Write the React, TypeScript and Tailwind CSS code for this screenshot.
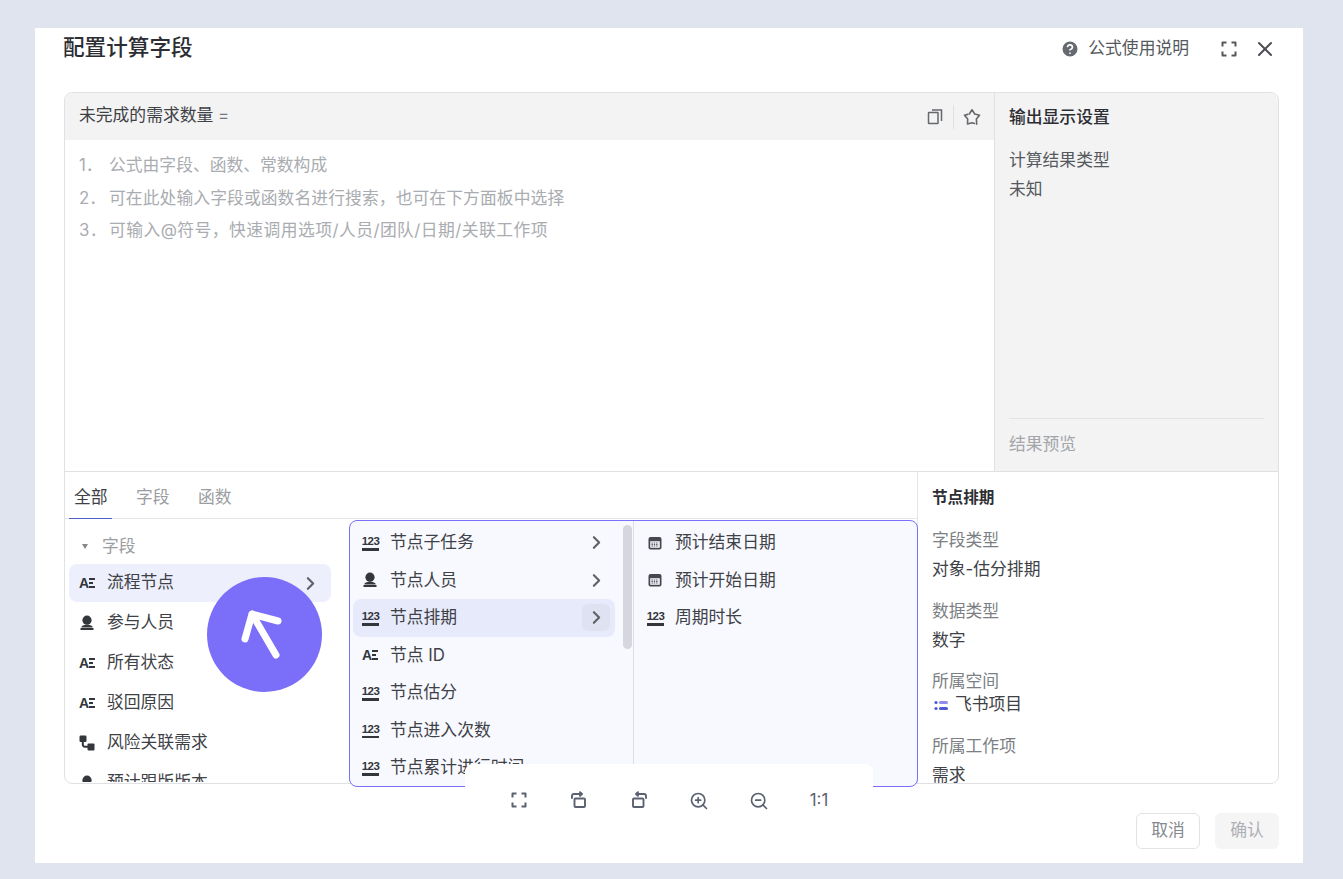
import { ChevronRight, CircleHelp, X, ZoomIn, ZoomOut } from "lucide-react";

type Kind = "num" | "text" | "user" | "link" | "date";

function NumIcon() {
  return (
    <span className="flex h-[16px] w-[17px] shrink-0 flex-col items-center justify-end">
      <span className="[font-family:'Liberation_Sans',sans-serif] text-[11.5px] leading-[11px] font-bold tracking-[-0.6px] text-[#33363a]">123</span>
      <span className="mt-[1px] h-[2.500px] w-[17px] bg-[#33363a]" />
    </span>
  );
}

function TextIcon() {
  return (
    <span className="flex h-[15px] w-[16px] shrink-0 items-center">
      <span className="[font-family:'Liberation_Sans',sans-serif] text-[14px] leading-none font-bold text-[#33363a]">A</span>
      <span className="flex flex-col gap-[2px]">
        <span className="h-[2px] w-[6px] bg-[#33363a]" />
        <span className="h-[2px] w-[4px] bg-[#33363a]" />
        <span className="h-[2px] w-[6px] bg-[#33363a]" />
      </span>
    </span>
  );
}

function FieldIcon({ kind }: { kind: Kind }) {
  if (kind === "num") return <NumIcon />;
  if (kind === "text") return <TextIcon />;
  if (kind === "user") {
    return (
      <svg width="16" height="16" viewBox="0 0 16 16" className="shrink-0" fill="#33363a">
        <circle cx="8" cy="5.200" r="4.600" />
        <path d="M2.500 11.500c1-1.200 3.300-1.700 5.500-1.700s4.500.5 5.500 1.700v1h-11z" />
        <rect x="1.500" y="13" width="13" height="2" />
      </svg>
    );
  }
  if (kind === "link") {
    return (
      <svg width="16" height="16" viewBox="0 0 16 16" className="shrink-0" fill="#33363a">
        <rect x="0.500" y="0.500" width="7" height="6.500" rx="1.200" />
        <path d="M2.800 6h2v3.400c0 .9.500 1.400 1.400 1.400H9v2H6c-2 0-3.200-1.200-3.200-3.200z" />
        <rect x="8.500" y="8.500" width="7" height="7" rx="1" />
      </svg>
    );
  }
  return (
    <svg width="16" height="16" viewBox="0 0 16 16" className="shrink-0">
      <rect x="1.500" y="2" width="13" height="12.500" rx="2" fill="#45484e" />
      <rect x="3.200" y="6.200" width="9.600" height="6.600" fill="#f2f3f8" />
      <path d="M4.500 8h7M4.500 9.500h7M4.500 11h7" stroke="#45484e" strokeWidth="0.900" strokeDasharray="1.400 0.900" />
    </svg>
  );
}

function ExpandIcon({ color = "#5a6170" }: { color?: string }) {
  return (
    <svg width="18" height="18" viewBox="0 0 18 18" fill="none" stroke={color} strokeWidth="2" strokeLinejoin="round">
      <path d="M2.500 6.500V2.500h4M11.500 2.500h4v4M15.500 11.500v4h-4M6.500 15.500h-4v-4" />
    </svg>
  );
}

function RotateIcon({ flip }: { flip?: boolean }) {
  return (
    <svg width="18" height="18" viewBox="0 0 18 18" fill="none" stroke="#5a6170" strokeWidth="1.900" strokeLinecap="round" strokeLinejoin="round" className={flip ? "-scale-x-100" : ""}>
      <rect x="4.500" y="7.500" width="10.500" height="8.500" rx="1" />
      <path d="M2 7V5C2 3.800 2.800 3 4 3h7.500M10 1.200 12 3l-2 1.800" />
    </svg>
  );
}

function CopyIcon() {
  return (
    <svg width="17" height="17" viewBox="0 0 17 17" fill="none" stroke="#65686d" strokeWidth="1.500">
      <rect x="1.500" y="4.500" width="9.500" height="11" rx="0.500" />
      <path d="M5 2h9.500v11" />
    </svg>
  );
}

function PinStarIcon() {
  return (
    <svg width="18" height="18" viewBox="0 0 18 18" fill="none" stroke="#65686d" strokeWidth="1.600" strokeLinecap="round" strokeLinejoin="round">
      <path d="M6.300 6 9 1.800 11.700 6l4.800 1.200-3.100 3.900.3 5" />
      <path d="M11.500 15.500 9 14.700 4.500 16l.2-5-3.200-3.800L4.800 6.400" />
    </svg>
  );
}

const mainFields: { kind: Kind; label: string; active?: boolean }[] = [
  { kind: "text", label: "流程节点", active: true },
  { kind: "user", label: "参与人员" },
  { kind: "text", label: "所有状态" },
  { kind: "text", label: "驳回原因" },
  { kind: "link", label: "风险关联需求" },
  { kind: "user", label: "预计跟版版本" },
];

const nodeFields: { kind: Kind; label: string; arrow?: boolean; active?: boolean }[] = [
  { kind: "num", label: "节点子任务", arrow: true },
  { kind: "user", label: "节点人员", arrow: true },
  { kind: "num", label: "节点排期", arrow: true, active: true },
  { kind: "text", label: "节点 ID" },
  { kind: "num", label: "节点估分" },
  { kind: "num", label: "节点进入次数" },
  { kind: "num", label: "节点累计进行时间" },
];

const scheduleFields: { kind: Kind; label: string }[] = [
  { kind: "date", label: "预计结束日期" },
  { kind: "date", label: "预计开始日期" },
  { kind: "num", label: "周期时长" },
];

export default function App() {
  return (
    <div className="h-[879px] w-[1343px] overflow-hidden bg-[#e0e4ef] pt-[28px] pl-[35px] [font-family:Inter,'Noto_Sans_CJK_SC',sans-serif] text-[16.8px] text-[#3e4146]">
      <div className="relative flex h-[835px] w-[1268px] flex-col bg-white px-[29px]">
        <header className="flex h-[40px] items-center justify-between">
          <h1 className="-ml-[1px] text-[21.6px] leading-none font-medium text-[#2c2e33]">配置计算字段</h1>
          <div className="flex items-center pt-[2px]">
            <CircleHelp size={20} fill="#666a70" stroke="#ffffff" strokeWidth={2} className="mr-[8px]" />
            <span className="text-[#55585d]">公式使用说明</span>
            <span className="mr-[15px] ml-[31px]"><ExpandIcon color="#55585d" /></span>
            <X size={24} stroke="#4a4d52" strokeWidth={2} className="-mr-[3px]" />
          </div>
        </header>

        <section className="mt-[24px] flex h-[692px] w-[1215px] flex-col rounded-lg border border-[#dfe1e4]">
          <div className="flex h-[379px] border-b border-[#dfe1e4]">
            <div className="flex min-w-0 flex-1 flex-col">
              <div className="flex h-[47px] items-center justify-between rounded-tl-lg bg-[#f3f3f3] pr-[13px] pl-[14px]">
                <span className="pb-[2px]">未完成的需求数量 <span className="text-[#74777c]">=</span></span>
                <div className="flex items-center">
                  <CopyIcon />
                  <span className="mx-[9px] h-[24px] w-px bg-[#e0e1e3]" />
                  <PinStarIcon />
                </div>
              </div>
              <ol className="px-[14px] pt-[9px] leading-[32.5px] text-[#a9acb0]">
                <li><span className="inline-block w-[30px]">1．</span>公式由字段、函数、常数构成</li>
                <li className="tracking-[0.08px]"><span className="inline-block w-[30px]">2．</span>可在此处输入字段或函数名进行搜索，也可在下方面板中选择</li>
                <li className="tracking-[0.45px]"><span className="inline-block w-[30px]">3．</span>可输入@符号，快速调用选项/人员/团队/日期/关联工作项</li>
              </ol>
            </div>
            <aside className="flex w-[284px] shrink-0 flex-col rounded-tr-lg border-l border-[#dfe1e4] bg-[#f3f3f3] px-[14px]">
              <h2 className="mt-[11px] leading-[26px] font-medium text-[#2c2e33]">输出显示设置</h2>
              <p className="mt-[16px] leading-[29px] text-[#55585d]">计算结果类型</p>
              <p className="leading-[29px] text-[#55585d]">未知</p>
              <div className="mt-auto border-t border-[#e1e3e3] pt-[12px] pb-[14px] leading-[26px] text-[#a2a5a9]">结果预览</div>
            </aside>
          </div>

          <div className="flex min-h-0 flex-1">
            <div className="relative min-w-0 flex-1">
              <div className="flex h-[47px] gap-[28.400px] border-b border-[#e5e6e9] pl-[9px]">
                <div className="relative leading-[50px] text-[#3e4146]">
                  全部
                  <span className="absolute right-[-4px] bottom-[-1px] left-[-5px] h-[1.500px] bg-[#4d62c4]" />
                </div>
                <div className="leading-[50px] text-[#9a9da1]">字段</div>
                <div className="leading-[50px] text-[#9a9da1]">函数</div>
              </div>
              <div className="h-[263px] w-[284px] overflow-hidden rounded-bl-lg px-[4px]">
                <div className="flex h-[45px] items-center pt-[10px] pl-[13px] text-[#9a9da1]">
                  <span className="mr-[14px] h-0 w-0 border-x-[3.500px] border-t-[5px] border-x-transparent border-t-[#85888d]" />
                  字段
                </div>
                {mainFields.map((f) => (
                  <div key={f.label} className={`mb-[2px] flex h-[38px] w-[262px] items-center rounded-lg pr-[10px] pl-[10px] ${f.active ? "bg-[#edf0fc]" : ""}`}>
                    <span className="flex w-[28px] shrink-0"><FieldIcon kind={f.kind} /></span>
                    <span className="flex-1">{f.label}</span>
                    {f.active && <ChevronRight size={21} stroke="#5f6267" strokeWidth={2.500} />}
                  </div>
                ))}
              </div>

              <div className="absolute top-[48px] left-[284px] flex h-[267px] w-[569px] overflow-hidden rounded-lg border-[1.500px] border-[#7b6ef8] bg-[#f8f9ff]">
                <div className="relative w-[284px] shrink-0 border-r border-[#dcdde2] pt-[3px] pl-[3px]">
                  {nodeFields.map((f) => (
                    <div key={f.label} className={`flex h-[37.5px] w-[262px] items-center rounded-lg pr-[5px] pl-[9px] ${f.active ? "bg-[#e7eafa]" : ""}`}>
                      <span className="flex w-[28px] shrink-0"><FieldIcon kind={f.kind} /></span>
                      <span className="flex-1 whitespace-nowrap">{f.label}</span>
                      {f.arrow && (
                        <span className={`flex h-[27px] w-[28px] items-center justify-center rounded-md ${f.active ? "bg-[#dfe2f0]" : ""}`}>
                          <ChevronRight size={21} stroke="#5f6267" strokeWidth={2.500} />
                        </span>
                      )}
                    </div>
                  ))}
                  <span className="absolute top-[4px] right-[1px] h-[124px] w-[9px] rounded-full bg-[#d6d7de]" />
                </div>
                <div className="flex-1 pt-[3px] pl-[13px]">
                  {scheduleFields.map((f) => (
                    <div key={f.label} className="flex h-[37.5px] items-center">
                      <span className="flex w-[28px] shrink-0"><FieldIcon kind={f.kind} /></span>
                      <span>{f.label}</span>
                    </div>
                  ))}
                </div>
              </div>
            </div>

            <aside className="w-[361px] shrink-0 overflow-hidden rounded-br-lg border-l border-[#e5e6e9] pl-[14px]">
              <h3 className="mt-[13px] text-[15.6px] leading-[26px] font-semibold text-[#2c2e33]">节点排期</h3>
              <p className="mt-[16px] leading-[26px] text-[#7c7f84]">字段类型</p>
              <p className="mt-[3px] leading-[26px]">对象-估分排期</p>
              <p className="mt-[16px] leading-[26px] text-[#7c7f84]">数据类型</p>
              <p className="mt-[3px] leading-[26px]">数字</p>
              <p className="mt-[15px] leading-[26px] text-[#7c7f84]">所属空间</p>
              <div className="flex h-[22px] items-center">
                <svg width="15" height="11" viewBox="0 0 15 11" className="mr-[6px] ml-[2px]">
                  <circle cx="2" cy="2.500" r="1.600" fill="#4f5bd5" />
                  <circle cx="2" cy="8.500" r="1.600" fill="#4f5bd5" />
                  <rect x="5" y="1" width="9" height="3" rx="1.500" fill="#8f8cf0" />
                  <rect x="5" y="7" width="9" height="3" rx="1.500" fill="#4f5bd5" />
                </svg>
                飞书项目
              </div>
              <p className="mt-[17px] leading-[26px] text-[#7c7f84]">所属工作项</p>
              <p className="mt-[3px] leading-[26px]">需求</p>
            </aside>
          </div>
        </section>

        <footer className="mt-[29px] flex w-[1215px] justify-end gap-[15px]">
          <button className="h-[36px] w-[64px] rounded-md border border-[#e2e3e5] bg-white text-[#85888d]">取消</button>
          <button className="h-[36px] w-[64px] rounded-md bg-[#f5f5f6] text-[#aeb0b4]">确认</button>
        </footer>

        {/* viewer toolbar sitting over the dialog */}
        <div className="absolute top-[736px] left-[430px] flex h-[70px] w-[408px] items-start rounded-t-lg bg-white pt-[27px] pl-[24px]">
          <span className="flex w-[60px] justify-center"><ExpandIcon /></span>
          <span className="flex w-[60px] justify-center"><RotateIcon /></span>
          <span className="flex w-[60px] justify-center"><RotateIcon flip /></span>
          <span className="flex w-[60px] justify-center"><ZoomIn size={20} stroke="#5a6170" strokeWidth={2} /></span>
          <span className="flex w-[60px] justify-center"><ZoomOut size={20} stroke="#5a6170" strokeWidth={2} /></span>
          <span className="flex w-[60px] justify-center text-[16.8px] leading-[18px] text-[#5a6170]">1:1</span>
        </div>

        {/* click marker over the list */}
        <div className="absolute top-[549px] left-[172px] h-[115px] w-[115px] rounded-full bg-[#7b6ef8]">
          <svg width="115" height="115" viewBox="0 0 115 115" fill="none" stroke="#ffffff" strokeWidth="7" strokeLinecap="round" strokeLinejoin="round">
            <path d="M69 78 45 37M71 44 45 37 38 62" />
          </svg>
        </div>
      </div>
    </div>
  );
}
